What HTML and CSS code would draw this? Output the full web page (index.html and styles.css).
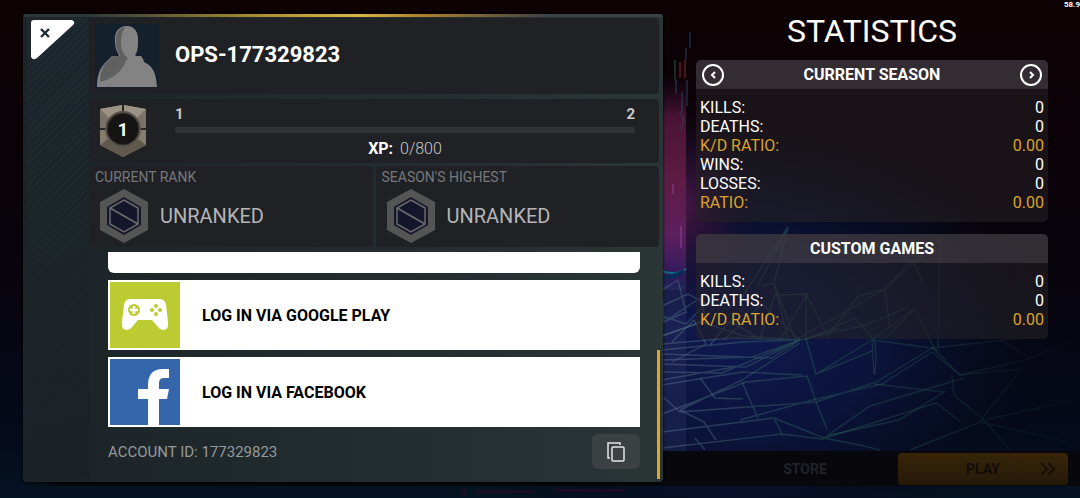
FILE: index.html
```
<!DOCTYPE html>
<html lang="en">
<head>
  <meta charset="utf-8">
  <title>Profile</title>
  <link rel="stylesheet" href="styles.css">
</head>
<body>
  <div id="lobby">
    <svg class="scene" viewBox="0 0 1080 498" preserveAspectRatio="none" aria-hidden="true">
      <defs>
        <linearGradient id="sky" x1="0" y1="0" x2="0" y2="1">
          <stop offset="0" stop-color="#0d0103"/>
          <stop offset="0.5" stop-color="#08030b"/>
          <stop offset="0.9" stop-color="#040b1c"/>
          <stop offset="1" stop-color="#051424"/>
        </linearGradient>
        <linearGradient id="pink" x1="0" y1="75" x2="0" y2="290" gradientUnits="userSpaceOnUse">
          <stop offset="0" stop-color="#2a0a2c" stop-opacity="0"/>
          <stop offset="0.2" stop-color="#4a1433"/>
          <stop offset="0.5" stop-color="#5e1c45"/>
          <stop offset="0.75" stop-color="#5c1f5e"/>
          <stop offset="0.93" stop-color="#2f1c5c"/>
          <stop offset="1" stop-color="#1b1f50"/>
        </linearGradient>
        <radialGradient id="haze">
          <stop offset="0" stop-color="#4a1746"/>
          <stop offset="1" stop-color="#1a0a24" stop-opacity="0"/>
        </radialGradient>
        <radialGradient id="blue">
          <stop offset="0" stop-color="#101950"/>
          <stop offset="0.45" stop-color="#0b143c" stop-opacity="0.95"/>
          <stop offset="0.75" stop-color="#070d24" stop-opacity="0.7"/>
          <stop offset="1" stop-color="#050816" stop-opacity="0"/>
        </radialGradient>
        <linearGradient id="fade" x1="660" x2="1080" y1="0" y2="0" gradientUnits="userSpaceOnUse">
          <stop offset="0" stop-color="#536b85" stop-opacity="0.5"/>
          <stop offset="0.3" stop-color="#2c5a5c" stop-opacity="0.5"/>
          <stop offset="0.65" stop-color="#204a48" stop-opacity="0.4"/>
          <stop offset="1" stop-color="#122a30" stop-opacity="0.1"/>
        </linearGradient>
      </defs>
      <rect width="1080" height="498" fill="url(#sky)"/>
      <ellipse cx="730" cy="340" rx="330" ry="220" fill="url(#blue)"/>
      <ellipse cx="680" cy="205" rx="80" ry="110" fill="url(#haze)"/>
      <rect x="655" y="75" width="31" height="215" fill="url(#pink)"/>
      <rect x="655" y="285" width="31" height="166" fill="#2c3565" opacity="0.35"/>
      <g fill="none" stroke-width="2">
        <path stroke="#1f4a3c" opacity="0.6" d="M675 60v20"/>
        <path stroke="#4a1120" d="M680 62v16M685 60v18"/>
        <path stroke="#27405c" opacity="0.5" d="M690 32v16M686 48v12M676 80v14M687 80v26M682 92v20M680 112l4 8-3 10"/>
        <path stroke="#8a3a86" opacity="0.6" d="M681 226v22M673 184v10"/>
        <path stroke="#0c6a83" d="M662 271q12 5 24-2"/>
        <path stroke="#0b2a55" stroke-width="4" d="M662 277q12 1 22-6"/>
      </g>
      <g fill="none" stroke="url(#fade)" stroke-width="1.4">
        <path d="M662 290l16-10 8 32-22 10zM662 306l26-12 18 10-20 20-24-8M664 322l36-24 6 22-44 16"/>
        <path d="M662 336l40-14 42 14 56 4 66-15 43-18M662 344l70-6 68 2 40-12M662 350l80-8 58-2M662 354l110 4 28-18M662 360l90-3 48-17"/>
        <path d="M662 364l84 3 54-27M662 372l60 1 78-33M662 380l78-14M662 385l80-13 60 3M672 342l22-22 12 24-34 18"/>
        <path d="M757 287l31-60-14 56 14 56M740 300l48-73M762 286l12-3 21 56M710 345l20-24 30 18 15-44 32-1-27 46M724 340l38-36 38 36"/>
        <path d="M806 339v-45l22 42 30-40 27-7 5 41M885 289l27-29 12 25M885 289l55-50-2 108M885 339l30-31 20 42 5 0M795 340l45-25 45-26M805 340l50-22 18 21 42-31"/>
        <path d="M806 339l10 35 56-34 2 34M872 340l60 8 92-10M874 335l2 20-1 20M680 410l62-30 58-37M662 414l84-32 61-6 10 28 10 25M816 374l56-23"/>
        <path d="M662 396l18 16 136-10 60-20 58-35M742 382l7 16 9 20M740 420l72-20 70-16 50-32 28 23 60-6M700 378l15 20 28 1"/>
        <path d="M662 432l112-14 50 20 46-32 94-28M680 410l24 12 12 18M774 418l9 18M662 448l120-14 40 5 114-36 24 18M824 438l40 8 16 4M695 438l10 12"/>
        <path d="M874 384l70 8-45 28-69 15M952 375l2 20 30 25 26 30M932 347l28 28 70-16M1000 340l30 18 46-18M980 421l40-50M980 421l90-20M910 450l70-28 90 20"/>
      </g>
      <g fill="#2a0b28" opacity="0.5"><rect x="462" y="488" width="4" height="8"/><rect x="476" y="490" width="58" height="3"/><rect x="556" y="489" width="70" height="3"/></g>
    </svg>
    <nav id="lobby-nav">
      <button type="button" class="store">STORE</button>
      <button type="button" class="play">
        PLAY
        <svg width="18" height="14" viewBox="0 0 18 14" fill="none" stroke="#171009" stroke-width="2" aria-hidden="true"><path d="M2 1l6 6-6 6M9 1l6 6-6 6"/></svg>
      </button>
    </nav>
  </div>

  <span id="fps">58.9</span>

  <main id="screen">
    <section id="profile">
      <div id="side">
        <button type="button" id="close" aria-label="Close">
          <svg width="44" height="40" viewBox="0 0 44 40" aria-hidden="true">
            <path d="M3 0h38q4 2 1 5L6 38q-4 3-6-1V3q0-3 3-3z" fill="#fff"/>
            <path d="M10 9l8 8M18 9l-8 8" stroke="#1c2b35" stroke-width="2.4"/>
          </svg>
        </button>
      </div>
      <div id="details">
        <header class="tile name-tile">
          <svg class="avatar" width="64" height="64" viewBox="0 0 64 64" aria-hidden="true">
            <rect width="64" height="64" fill="#14202b"/>
            <path d="M32 2c8 0 12 7 11 16 0 7-1 11-3 13l1 1h5q2 2 3 6c8 4 12 9 13 25H2c0-12 3-19 8-24 2-2 5-5 7-7h6l1-1c-3-4-4-9-4-14C19 9 23 2 32 2z" fill="#838383"/>
            <path d="M30 3c-4 6-5 15-3 23 2 5 4 7 6 8l-2 3c-4 11-14 18-26 21 0-8 2-15 6-19 2-2 5-5 7-7h6l1-1c-3-4-4-9-4-14C20 10 24 4 30 3z" fill="#606061"/>
          </svg>
          <h1>OPS-177329823</h1>
        </header>

        <div class="tile xp-tile">
          <div class="level">
            <svg width="48" height="52" viewBox="0 0 48 52" aria-hidden="true">
              <path d="M1 4L24 0l23 4v36L24 52 1 40z" fill="#857c70"/>
              <path d="M1 4l22-4v8L10 13zM47 4L25 0v8l13 5z" fill="#9c9286"/>
              <path d="M1 4l9 9-3 12H1zM47 4l-9 9 3 12h6z" fill="#7b7267"/>
              <path d="M1 40l8-6 15 8 15-8 8 6-23 12z" fill="#61594e"/>
              <path d="M24 0v7M0 24h8M40 24h8" stroke="#292724" stroke-width="2"/>
              <circle cx="24" cy="24" r="18" fill="#5b554d"/>
              <circle cx="24" cy="24" r="16" fill="#151413" stroke="#39352f" stroke-width="1"/>
            </svg>
            <span>1</span>
          </div>
          <div class="xp">
            <div class="xp-levels"><span>1</span><span>2</span></div>
            <progress value="0" max="800" aria-labelledby="xp-text"></progress>
            <div id="xp-text"><b>XP:</b> 0/800</div>
          </div>
        </div>

        <div class="ranks">
          <div class="tile rank-tile">
            <h2>CURRENT RANK</h2>
            <div class="rank">
              <svg width="48" height="54" viewBox="0 0 48 54" aria-hidden="true">
                <path d="M24 0l24 13v28L24 54 0 41V13z" fill="#555556"/>
                <path d="M24 8l17 10v18L24 46 7 36V18z" fill="#17172a"/>
                <path d="M24 11l14 8v16l-14 8-14-8V19z" fill="#15152b" stroke="#6a6a6c" stroke-width="1.5"/>
                <path d="M10 19l28 16" stroke="#6a6a6c" stroke-width="2"/>
              </svg>
              <span>UNRANKED</span>
            </div>
          </div>
          <div class="tile rank-tile">
            <h2>SEASON'S HIGHEST</h2>
            <div class="rank">
              <svg width="48" height="54" viewBox="0 0 48 54" aria-hidden="true">
                <path d="M24 0l24 13v28L24 54 0 41V13z" fill="#555556"/>
                <path d="M24 8l17 10v18L24 46 7 36V18z" fill="#17172a"/>
                <path d="M24 11l14 8v16l-14 8-14-8V19z" fill="#15152b" stroke="#6a6a6c" stroke-width="1.5"/>
                <path d="M10 19l28 16" stroke="#6a6a6c" stroke-width="2"/>
              </svg>
              <span>UNRANKED</span>
            </div>
          </div>
        </div>

        <div id="account">
          <div class="blank-card"></div>
          <button type="button" class="login">
            <svg width="70" height="66" viewBox="0 0 70 66" aria-hidden="true">
              <rect width="70" height="66" fill="#bccb32"/>
              <path d="M20 17h30q5 0 6 6l2 17q1 8-5 8-3 0-5-3l-6-7H28l-6 7q-2 3-5 3-6 0-5-8l2-17q1-6 6-6z" fill="#fff"/>
              <circle cx="24" cy="28" r="6" fill="#bccb32"/>
              <path d="M24 24v8M20 28h8" stroke="#fff" stroke-width="2.5"/>
              <g fill="#bccb32"><circle cx="46" cy="24" r="2"/><circle cx="46" cy="32" r="2"/><circle cx="42" cy="28" r="2"/><circle cx="50" cy="28" r="2"/></g>
            </svg>
            <span>LOG IN VIA GOOGLE PLAY</span>
          </button>
          <button type="button" class="login">
            <svg width="70" height="66" viewBox="0 0 70 66" aria-hidden="true">
              <rect width="70" height="66" fill="#3566ab"/>
              <path d="M38 66V40H28V30h10v-4q0-16 15-16h6v9h-5q-5 0-5 5v6h10l-2 10h-8v26z" fill="#fff"/>
            </svg>
            <span>LOG IN VIA FACEBOOK</span>
          </button>
          <div class="account-id">
            <span>ACCOUNT ID: 177329823</span>
            <button type="button" class="copy" aria-label="Copy">
              <svg width="18" height="20" viewBox="0 0 18 20" fill="none" stroke="#e4e6e8" stroke-width="1.5" aria-hidden="true"><rect x="5" y="5" width="12" height="14" rx="1"/><path d="M3 16H1V1h12v2"/></svg>
            </button>
          </div>
        </div>
      </div>
      <div class="scroll-thumb"></div>
    </section>

    <section id="stats">
      <h1>STATISTICS</h1>
      <div class="card">
        <div class="card-head">
          <button type="button" class="arrow" aria-label="Previous">
            <svg width="24" height="24" viewBox="0 0 24 24" fill="none" stroke="#fff" stroke-width="2" aria-hidden="true"><circle cx="12" cy="12" r="10"/><path d="M14 9l-3 3 3 3"/></svg>
          </button>
          <h2>CURRENT SEASON</h2>
          <button type="button" class="arrow" aria-label="Next">
            <svg width="24" height="24" viewBox="0 0 24 24" fill="none" stroke="#fff" stroke-width="2" aria-hidden="true"><circle cx="12" cy="12" r="10"/><path d="M11 9l3 3-3 3"/></svg>
          </button>
        </div>
        <table>
          <tr><th>KILLS:</th><td>0</td></tr>
          <tr><th>DEATHS:</th><td>0</td></tr>
          <tr class="ratio"><th>K/D RATIO:</th><td>0.00</td></tr>
          <tr><th>WINS:</th><td>0</td></tr>
          <tr><th>LOSSES:</th><td>0</td></tr>
          <tr class="ratio"><th>RATIO:</th><td>0.00</td></tr>
        </table>
      </div>
      <div class="card">
        <div class="card-head">
          <h2>CUSTOM GAMES</h2>
        </div>
        <table>
          <tr><th>KILLS:</th><td>0</td></tr>
          <tr><th>DEATHS:</th><td>0</td></tr>
          <tr class="ratio"><th>K/D RATIO:</th><td>0.00</td></tr>
        </table>
      </div>
    </section>
  </main>
</body>
</html>
```
FILE: styles.css
```
html, body {
  height: 100%;
  margin: 0;
  background-color: #08030b;
}
body {
  position: relative;
  overflow: hidden;
  font-family: Roboto, "Liberation Sans", sans-serif;
  font-size: 16px;
  color: #fff;
}
* {
  box-sizing: border-box;
}
h1, h2 {
  margin: 0;
}
button {
  margin: 0;
  padding: 0;
  border: 0;
  background: none;
  font: inherit;
  color: inherit;
  cursor: pointer;
}
svg {
  display: block;
  flex: none;
}

/* lobby behind the profile window */
#lobby {
  position: absolute;
  inset: 0;
  display: flex;
  flex-direction: column;
  justify-content: flex-end;
  padding-bottom: 12px;
}
.scene {
  position: absolute;
  inset: 0;
  width: 100%;
  height: 100%;
}
#lobby-nav {
  position: relative;
  display: flex;
  justify-content: flex-end;
  height: 35px;
  padding: 2px 12px 1px 0;
  background-image: linear-gradient(90deg, rgba(7, 7, 12, 0) 2%, #07070c 6%);
  font-size: 14px;
  font-weight: bold;
}
.store {
  width: 186px;
  color: #222226;
}
.play {
  position: relative;
  width: 170px;
  border-radius: 4px;
  background-image: linear-gradient(#372508, #251909);
  color: #120d08;
}
.play svg {
  position: absolute;
  top: 9px;
  right: 11px;
}
#fps {
  position: absolute;
  top: 0;
  right: 0;
  font-size: 8px;
  line-height: 9px;
  font-weight: bold;
}

#screen {
  position: relative;
  display: grid;
  grid-template-columns: 20fr 11fr;
  gap: 33px;
  height: 100%;
  padding: 14px 32px 16px 23px;
}

/* profile window */
#profile {
  position: relative;
  display: flex;
  min-width: 0;
  min-height: 0;
  padding: 4px;
  border-radius: 4px;
  background-color: #232c2e;
  background-image: linear-gradient(90deg, #1b2327, #1f282b 30%, #2a3536);
  box-shadow: 0 0 3px #000;
}
#profile::before {
  content: "";
  position: absolute;
  top: 0;
  left: 0;
  right: 0;
  height: 3px;
  border-radius: 4px 4px 0 0;
  background-image: linear-gradient(90deg, #2c3739 10%, #a88a2f 36%, #d8b846 52%, #b0812c 62%, #3b4243 82%);
}
#side {
  width: 62px;
  padding: 2px 4px;
  background-image: linear-gradient(rgba(27, 34, 38, 0), #1b2226), repeating-linear-gradient(135deg, #1b252b 0, #1b252b 2px, #1f2a30 3px, #1f2a30 5px);
}
#details {
  display: flex;
  flex: 1;
  flex-direction: column;
  min-width: 0;
}
.tile {
  border-radius: 4px;
  background-color: #202125;
}
.name-tile {
  display: flex;
  align-items: center;
  gap: 16px;
  height: 76px;
  margin-bottom: 5px;
  padding: 0 6px;
}
.name-tile h1 {
  padding-bottom: 4px;
  font-size: 22px;
}
.xp-tile {
  display: flex;
  align-items: center;
  gap: 28px;
  height: 64px;
  margin-bottom: 3px;
  padding: 0 24px 0 10px;
}
.level {
  display: grid;
  place-items: center;
  font-size: 18px;
  font-weight: bold;
}
.level svg, .level span {
  grid-area: 1 / 1;
}
.level span {
  padding-bottom: 4px;
}
.xp {
  flex: 1;
}
.xp-levels {
  display: flex;
  justify-content: space-between;
  font-size: 15px;
  line-height: 20px;
  font-weight: bold;
  color: #c9c9cb;
}
progress {
  display: block;
  width: 100%;
  height: 6px;
  margin: 3px 0 6px;
  border: 0;
  border-radius: 2px;
  background-color: #303135;
  appearance: none;
}
progress::-webkit-progress-bar {
  border-radius: 2px;
  background-color: #303135;
}
#xp-text {
  line-height: 20px;
  text-align: center;
  font-weight: 300;
  color: #c9c9cb;
}
#xp-text b {
  margin-right: 3px;
  font-weight: bold;
  color: #fff;
}
.ranks {
  display: grid;
  grid-template-columns: 1fr 1fr;
  gap: 3px;
  margin-bottom: 5px;
}
.rank-tile {
  height: 81px;
  padding: 2px 6px;
}
.rank-tile h2 {
  font-size: 14px;
  line-height: 19px;
  font-weight: normal;
  color: #77787b;
}
.rank {
  display: flex;
  align-items: center;
  gap: 12px;
  padding: 2px 5px;
  font-size: 20px;
  color: #b4b5b7;
}
#account {
  display: flex;
  flex: 1;
  flex-direction: column;
  justify-content: flex-end;
  gap: 7px;
  min-height: 0;
  padding: 0 19px 9px;
  overflow: hidden;
}
.blank-card {
  flex: none;
  height: 70px;
  border-radius: 6px;
  background-color: #fff;
}
.login {
  display: flex;
  flex: none;
  align-items: center;
  gap: 22px;
  height: 70px;
  padding: 0 2px;
  background-color: #fff;
  color: #000;
  font-size: 16px;
  font-weight: bold;
}
.account-id {
  display: flex;
  flex: none;
  align-items: center;
  justify-content: space-between;
  font-size: 15px;
  color: #96999b;
}
.copy {
  display: grid;
  place-items: center;
  width: 48px;
  height: 35px;
  border-radius: 6px;
  background-color: #3b4043;
}
.scroll-thumb {
  position: absolute;
  right: 3px;
  bottom: 3px;
  width: 3px;
  height: 129px;
  background-color: #e0a526;
}

/* statistics */
#stats {
  min-width: 0;
}
#stats h1 {
  font-size: 32px;
  line-height: 34px;
  font-weight: normal;
  text-align: center;
}
.card {
  margin: 12px 0;
  padding-bottom: 10px;
  border-radius: 5px;
  background-color: rgba(38, 34, 38, 0.55);
}
.card-head {
  display: flex;
  align-items: center;
  justify-content: space-between;
  height: 29px;
  padding: 0 5px;
  border-radius: 5px 5px 0 0;
  background-color: rgba(72, 68, 74, 0.55);
}
.card-head h2 {
  flex: 1;
  font-size: 16px;
  text-align: center;
}
table {
  width: 100%;
  padding: 9px 4px 0;
  border-spacing: 0;
}
th, td {
  padding: 0;
  line-height: 19px;
  font-weight: normal;
  text-align: left;
}
td {
  text-align: right;
}
.ratio {
  color: #dba32b;
}
```
